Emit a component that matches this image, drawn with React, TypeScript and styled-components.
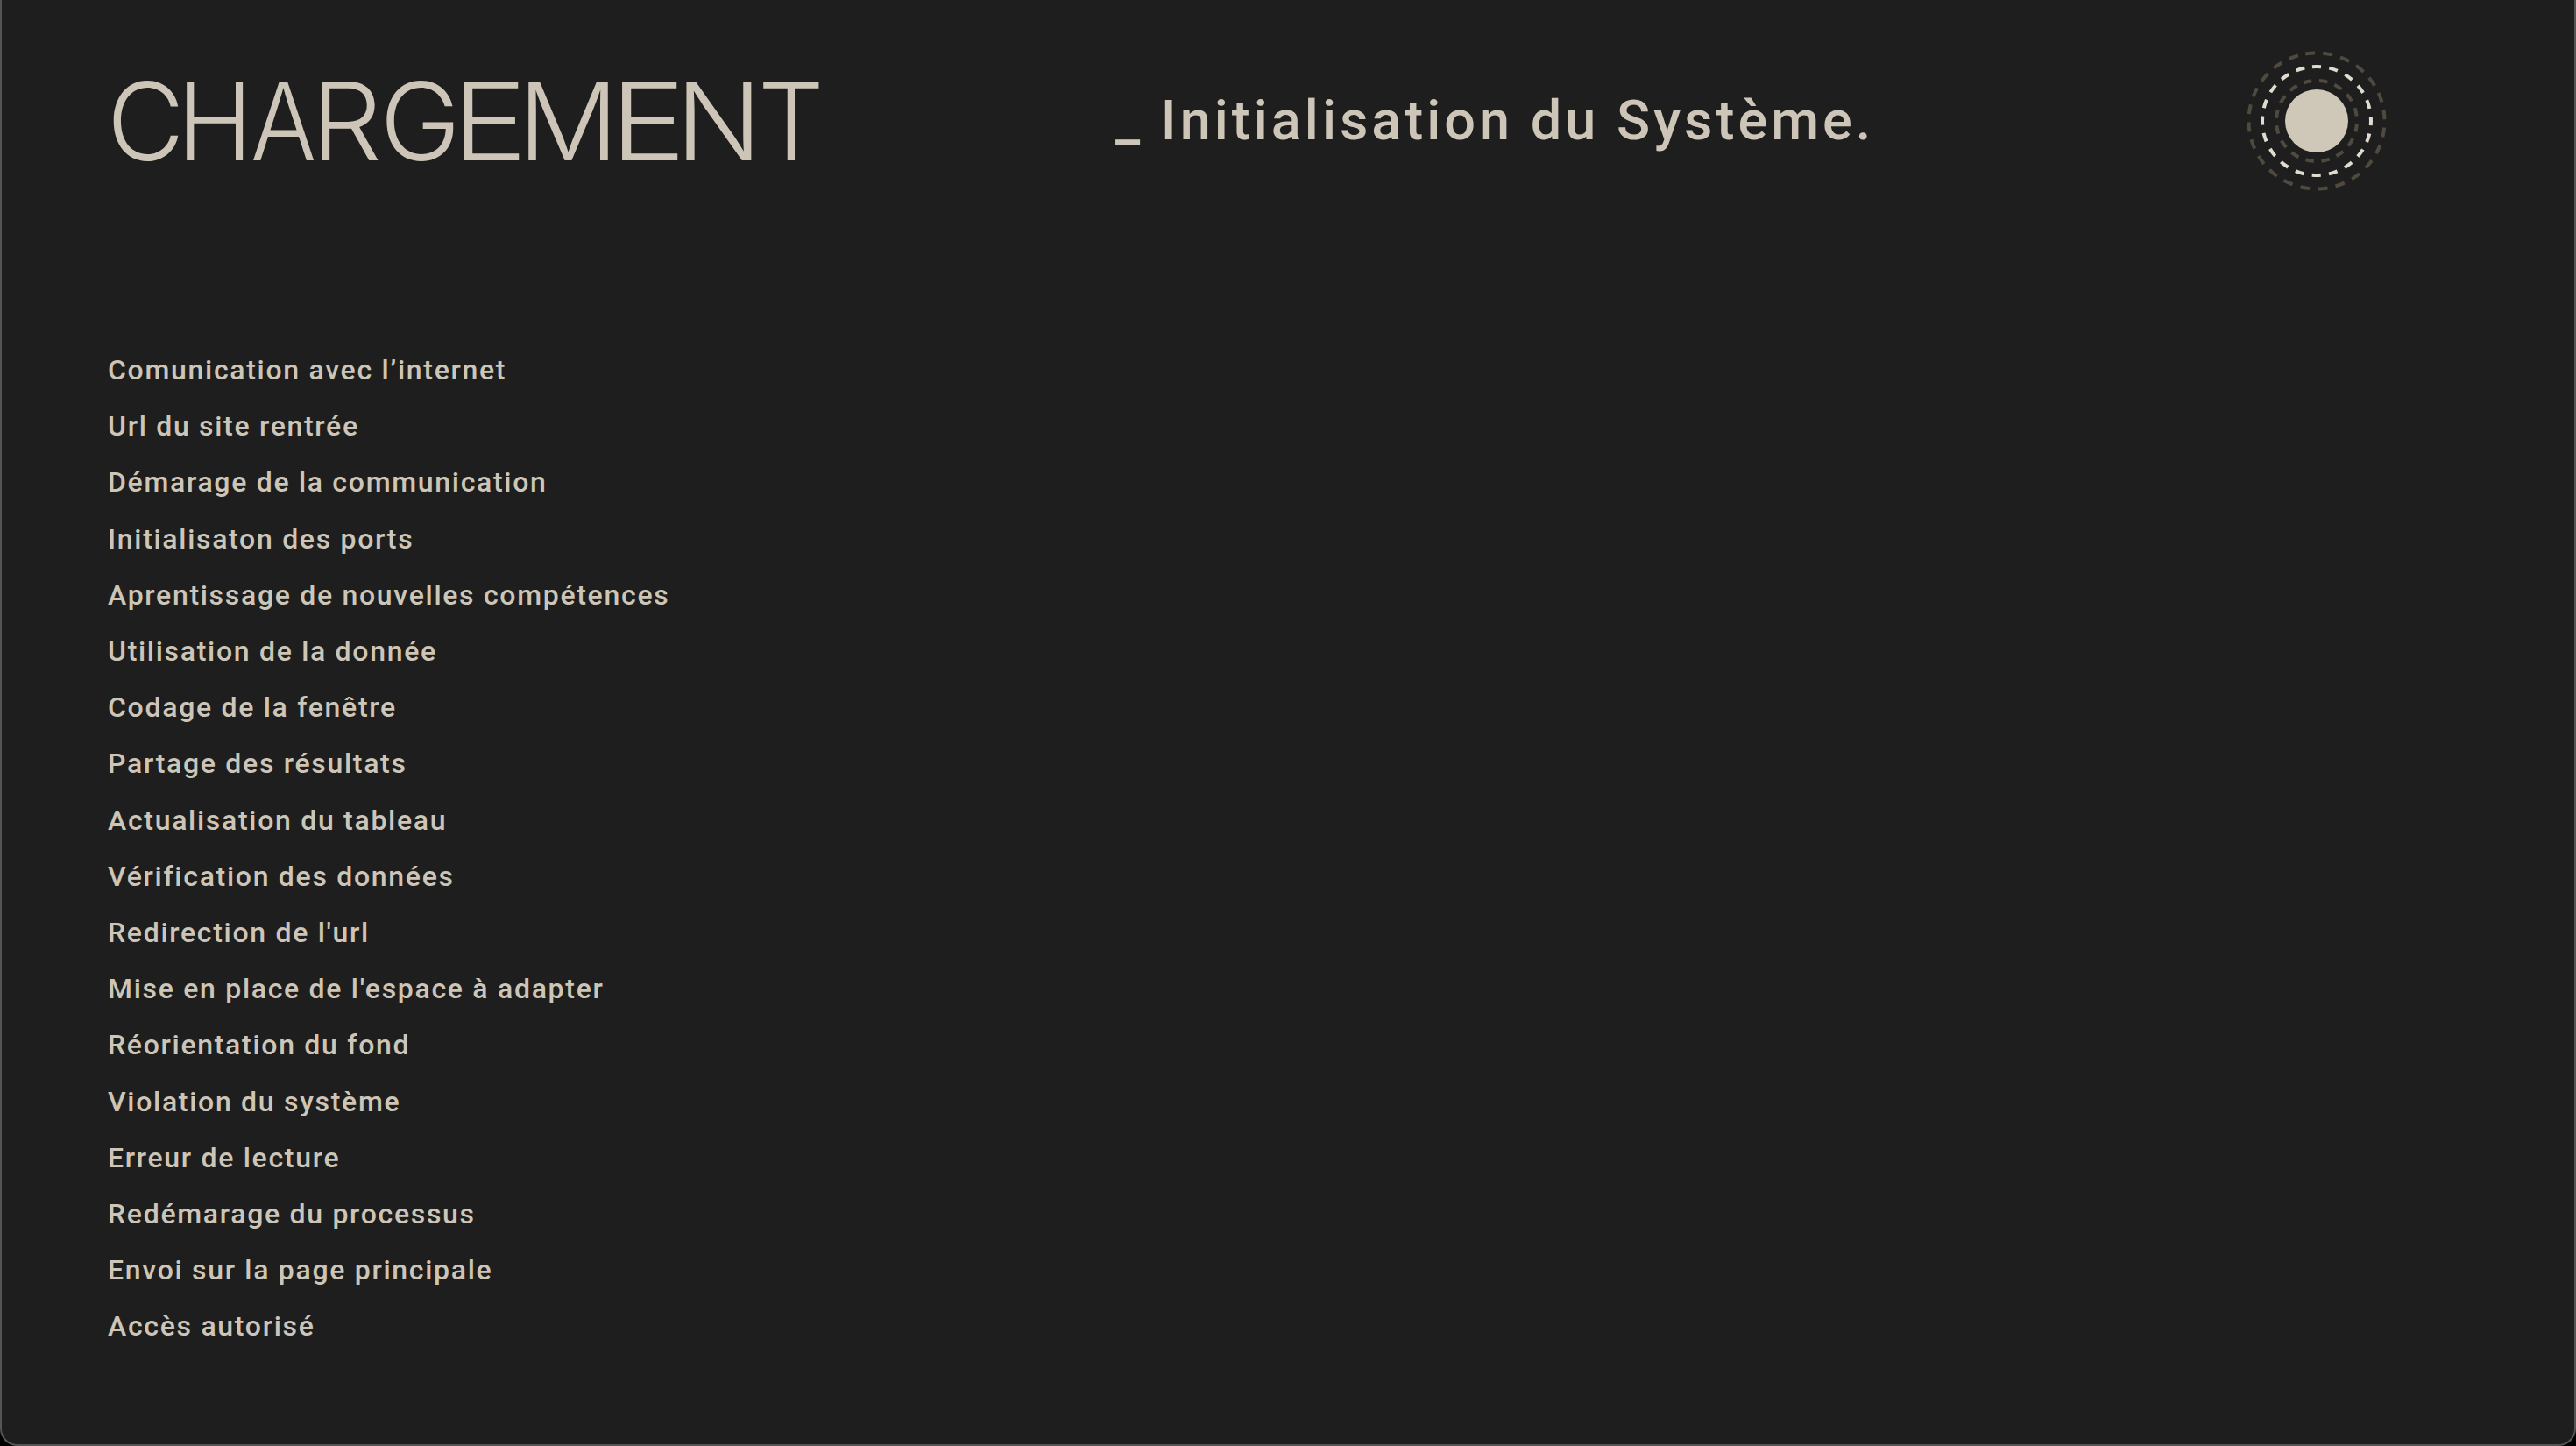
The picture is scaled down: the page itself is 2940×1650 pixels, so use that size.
import React from "react";
import styled, { createGlobalStyle } from "styled-components";

const Global = createGlobalStyle`
  html, body { margin: 0; padding: 0; background: #000; }
  * { box-sizing: border-box; }
`;

const Frame = styled.main`
  width: 2940px;
  height: 1650px;
  background: #1e1e1e;
  border: 2px solid #555;
  border-top: none;
  border-radius: 0 0 20px 20px;
  color: #cdc6b8;
  font-family: Roboto, "Liberation Sans", sans-serif;
  overflow: hidden;
`;

const Header = styled.header`
  display: grid;
  grid-template-columns: 1149px 1281px 180px;
  align-items: center;
  margin: 48px 0 0 122px;
`;

const Title = styled.h1`
  display: flex;
  margin: 0;
  height: 125px;
  font-family: Inter, Roboto, sans-serif;
  font-size: 124px;
  font-weight: 300;
  line-height: 125px;
  letter-spacing: -16px;
`;

const Glyph = styled.span<{ $left: number; $sx: number }>`
  display: block;
  width: 0;
  margin-left: ${(p) => p.$left}px;
  transform: scaleX(${(p) => p.$sx});
  transform-origin: left center;
`;

const Subtitle = styled.h2`
  margin: 0;
  font-size: 63px;
  font-weight: 500;
  letter-spacing: 4px;
  line-height: 80px;
  white-space: pre;
`;

const List = styled.ul`
  list-style: none;
  margin: 162px 0 0 121px;
  padding: 0;
`;

const Item = styled.li`
  font-size: 32px;
  font-weight: 500;
  line-height: 64.2px;
  letter-spacing: 1.7px;
`;

const Spinner = styled.svg`
  display: block;
  width: 180px;
  height: 180px;
`;

const rows = [
  "Comunication avec l’internet",
  "Url du site rentrée",
  "Démarage de la communication",
  "Initialisaton des ports",
  "Aprentissage de nouvelles compétences",
  "Utilisation de la donnée",
  "Codage de la fenêtre",
  "Partage des résultats",
  "Actualisation du tableau",
  "Vérification des données",
  "Redirection de l'url",
  "Mise en place de l'espace à adapter",
  "Réorientation du fond",
  "Violation du système",
  "Erreur de lecture",
  "Redémarage du processus",
  "Envoi sur la page principale",
  "Accès autorisé",
];

const glyphs: [string, number, number][] = [
  ["C", -2, 0.98],
  ["H", 80, 0.94],
  ["A", 83.5, 0.9],
  ["R", 69, 1.03],
  ["G", 79, 1],
  ["E", 81, 1.18],
  ["M", 76, 1.03],
  ["E", 105, 1.18],
  ["N", 75, 1.05],
  ["T", 94, 0.96],
];

function Ring(props: { r: number; count: number; dash: number; at: number; color: string }) {
  const { r, count, dash, at, color } = props;
  const gap = (2 * Math.PI * r) / count - dash;
  const half = ((dash / 2) / r) * (180 / Math.PI);
  return (
    <circle
      cx={90}
      cy={90}
      r={r}
      fill="none"
      stroke={color}
      strokeWidth={4}
      strokeDasharray={`${dash} ${gap}`}
      transform={`rotate(${at - 90 - half} 90 90)`}
    />
  );
}

export default function App() {
  return (
    <>
      <Global />
      <Frame>
        <Header>
          <Title>
            {glyphs.map(([c, left, sx], i) => (
              <Glyph key={i} $left={left} $sx={sx}>
                {c}
              </Glyph>
            ))}
          </Title>
          <Subtitle>_ Initialisation du Système.</Subtitle>
          <Spinner viewBox="0 0 180 180">
            <Ring r={77.5} count={24} dash={11} at={-5.5} color="#4f493e" />
            <Ring r={62} count={20} dash={10} at={0} color="#e0dbcf" />
            <Ring r={46} count={16} dash={9.5} at={-13} color="#4f493e" />
            <circle cx={90} cy={90} r={36} fill="#cfc8b9" />
          </Spinner>
        </Header>
        <List>
          {rows.map((r) => (
            <Item key={r}>{r}</Item>
          ))}
        </List>
      </Frame>
    </>
  );
}
